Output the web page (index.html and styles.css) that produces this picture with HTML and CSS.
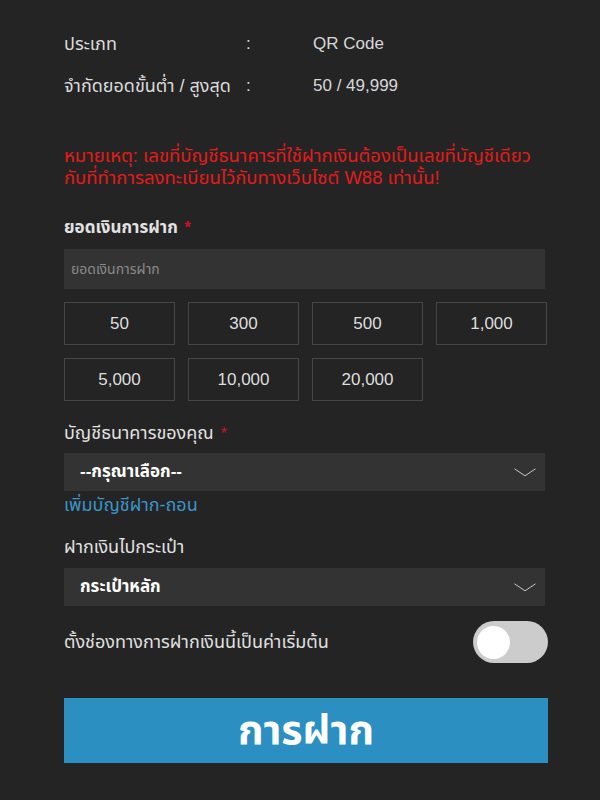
FILE: index.html
```html
<!DOCTYPE html>
<html lang="th">
<head>
<meta charset="utf-8">
<link rel="stylesheet" href="styles.css">
</head>
<body>
<div class="page">
  <div class="info">
    <div class="info-row"><span class="info-key">ประเภท</span><span class="info-colon">:</span><span class="info-val">QR Code</span></div>
    <div class="info-row"><span class="info-key">จำกัดยอดขั้นต่ำ / สูงสุด</span><span class="info-colon">:</span><span class="info-val">50 / 49,999</span></div>
  </div>
  <p class="note">หมายเหตุ: เลขที่บัญชีธนาคารที่ใช้ฝากเงินต้องเป็นเลขที่บัญชีเดียว<br>กับที่ทำการลงทะเบียนไว้กับทางเว็บไซต์ W88 เท่านั้น!</p>

  <div class="field f-amount">
    <div class="label bold">ยอดเงินการฝาก <span class="req">*</span></div>
    <div class="input"><span class="placeholder">ยอดเงินการฝาก</span></div>
  </div>

  <div class="amounts">
    <div class="amt">50</div>
    <div class="amt">300</div>
    <div class="amt">500</div>
    <div class="amt">1,000</div>
    <div class="amt">5,000</div>
    <div class="amt">10,000</div>
    <div class="amt">20,000</div>
  </div>

  <div class="field f-bank">
    <div class="label">บัญชีธนาคารของคุณ <span class="req">*</span></div>
    <div class="select"><span class="sel-text">--กรุณาเลือก--</span>
      <svg class="chev" width="22" height="9" viewBox="0 0 22 9"><path d="M0.5 0.8 L11 7.8 L21.5 0.8" fill="none" stroke="#c8c8c8" stroke-width="1"/></svg>
    </div>
    <div class="link">เพิ่มบัญชีฝาก-ถอน</div>
  </div>

  <div class="field f-wallet">
    <div class="label">ฝากเงินไปกระเป๋า</div>
    <div class="select"><span class="sel-text">กระเป๋าหลัก</span>
      <svg class="chev" width="22" height="9" viewBox="0 0 22 9"><path d="M0.5 0.8 L11 7.8 L21.5 0.8" fill="none" stroke="#c8c8c8" stroke-width="1"/></svg>
    </div>
  </div>

  <div class="toggle-row">
    <span class="toggle-text">ตั้งช่องทางการฝากเงินนี้เป็นค่าเริ่มต้น</span>
    <div class="toggle"><div class="knob"></div></div>
  </div>

  <div class="submit">การฝาก</div>
</div>
</body>
</html>
```

FILE: styles.css
```css
html, body {
  margin: 0;
  padding: 0;
  background: #242424;
}
body {
  font-family: Tahoma, "Liberation Sans", "Noto Sans Thai", "Noto Sans", sans-serif;
  color: #dcdcdc;
  font-size: 18px;
}
.page {
  width: 484px;
  padding: 23px 52px 0 64px;
  height: 777px;
}
.info-row {
  display: flex;
  align-items: center;
  height: 42px;
  line-height: 24px;
}
.info-key { width: 182px; font-size: 18px; }
.info-colon { width: 67px; font-size: 17px; }
.info-val { font-size: 17px; color: #d8d8d8; }
.note {
  margin: 38px 0 0 0;
  color: #e41b1b;
  font-size: 18.5px;
  line-height: 22px;
  white-space: nowrap;
}
.label {
  font-size: 18px;
  line-height: 24px;
  color: #e2e2e2;
}
.label.bold { font-weight: bold; font-size: 17px; }
.req { color: #d0102a; margin-left: 2px; font-size: 16px; }
.f-amount { margin-top: 27px; }
.input {
  margin-top: 9px;
  height: 40px;
  width: 481px;
  background: #333333;
  display: flex;
  align-items: center;
  padding-left: 7px;
  box-sizing: border-box;
}
.placeholder { color: #8a8a8a; font-size: 14px; }
.amounts {
  margin-top: 13px;
  display: grid;
  grid-template-columns: repeat(4, 111px);
  column-gap: 13px;
  row-gap: 13px;
}
.amt {
  height: 43px;
  box-sizing: border-box;
  border: 1px solid #464646;
  display: flex;
  align-items: center;
  justify-content: center;
  font-size: 17px;
  color: #dedede;
  font-family: "Liberation Sans", Arial, sans-serif;
}
.f-bank { margin-top: 20px; }
.select {
  margin-top: 7px;
  height: 38px;
  width: 481px;
  background: #333333;
  display: flex;
  align-items: center;
  justify-content: space-between;
  padding: 0 9px 0 16px;
  box-sizing: border-box;
}
.sel-text { font-weight: bold; color: #ffffff; font-size: 17px; }
.link {
  color: #3a95c9;
  font-size: 18px;
  line-height: 24px;
  margin-top: 2px;
}
.f-wallet { margin-top: 18px; }
.f-wallet .select { margin-top: 9px; }
.toggle-row {
  margin-top: 15px;
  display: flex;
  align-items: center;
  justify-content: space-between;
}
.toggle-text { font-size: 18px; color: #e0e0e0; }
.toggle {
  width: 75px;
  height: 42px;
  border-radius: 21px;
  background: #cccccc;
  display: flex;
  align-items: center;
  padding-left: 4px;
  box-sizing: border-box;
}
.knob {
  width: 33px;
  height: 33px;
  border-radius: 50%;
  background: #ffffff;
}
.submit {
  margin-top: 35px;
  height: 65px;
  background: #2b8fc2;
  color: #ffffff;
  font-weight: bold;
  font-size: 41px;
  display: flex;
  align-items: center;
  justify-content: center;
}
```
